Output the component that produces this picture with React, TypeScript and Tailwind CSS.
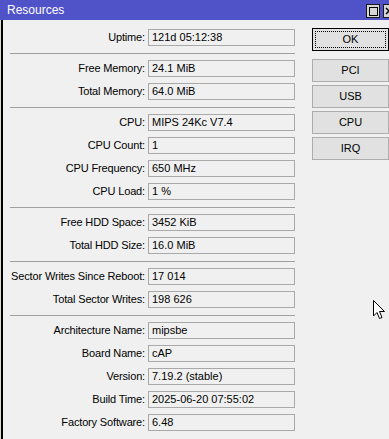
import React from 'react';

const sections: [string, string][][] = [
  [['Uptime', '121d 05:12:38']],
  [
    ['Free Memory', '24.1 MiB'],
    ['Total Memory', '64.0 MiB'],
  ],
  [
    ['CPU', 'MIPS 24Kc V7.4'],
    ['CPU Count', '1'],
    ['CPU Frequency', '650 MHz'],
    ['CPU Load', '1 %'],
  ],
  [
    ['Free HDD Space', '3452 KiB'],
    ['Total HDD Size', '16.0 MiB'],
  ],
  [
    ['Sector Writes Since Reboot', '17 014'],
    ['Total Sector Writes', '198 626'],
  ],
  [
    ['Architecture Name', 'mipsbe'],
    ['Board Name', 'cAP'],
    ['Version', '7.19.2 (stable)'],
    ['Build Time', '2025-06-20 07:55:02'],
    ['Factory Software', '6.48'],
  ],
];

function Field({ label, value }: { label: string; value: string }) {
  return (
    <div className="flex items-center">
      <span className="w-[138px] shrink-0 whitespace-nowrap pr-[3px] text-right leading-[17px] tracking-[-0.15px]">
        {label}:
      </span>
      <div className="h-[17px] w-[147px] border border-[#a9a9a9] pl-[3px] leading-[15px]">{value}</div>
    </div>
  );
}

function SideButton({ children, isDefault }: { children: React.ReactNode; isDefault?: boolean }) {
  return (
    <button
      className={`relative h-[23px] w-[77px] bg-[#e1e1e1] leading-[21px] ${
        isDefault ? 'border border-black' : 'border border-[#adadad]'
      }`}
    >
      {isDefault && <span className="absolute inset-[2px] border border-dotted border-black" />}
      <span className="relative">{children}</span>
    </button>
  );
}

export default function App() {
  return (
    <div className="relative h-[439px] w-[389px] overflow-hidden bg-[#f0f0f0] font-['Liberation_Sans',Arial,sans-serif] text-[11px] text-black">
      <header className="flex h-[20px] items-center bg-[#5052c8] pl-[7px]">
        <span className="text-[12px] text-white">Resources</span>
        <div className="ml-auto flex gap-[3px] self-start pt-[4px]">
          <div className="flex h-[14px] w-[14px] items-center justify-center border border-[#1a1a1a] bg-[#d6d6d6]">
            <div className="h-[9px] w-[9px] border-[1.5px] border-black" />
          </div>
          <div className="h-[14px] w-[6px] overflow-hidden border-y border-l border-[#1a1a1a] bg-[#d6d6d6]">
            <svg width="6" height="12" viewBox="0 0 6 12">
              <path d="M2 3 L8 9 M8 3 L2 9" stroke="#000" strokeWidth="1.5" />
            </svg>
          </div>
        </div>
      </header>

      <div className="flex h-[419px]">
        <div className="w-px shrink-0 bg-[#e4dccb]" />
        <div className="w-[2px] shrink-0 bg-black" />

        <div className="flex w-[292px] shrink-0 flex-col pl-[7px] pt-[9px]">
          {sections.map((rows, i) => (
            <div key={i} className="flex flex-col">
              {i > 0 && <div className="mb-[6px] mt-[7px] h-px w-[285px] bg-[#a0a0a0]" />}
              <div className="flex flex-col gap-[6px]">
                {rows.map(([label, value]) => (
                  <Field key={label} label={label} value={value} />
                ))}
              </div>
            </div>
          ))}
        </div>

        <div className="ml-[17px] flex flex-col pt-[8px]">
          <SideButton isDefault>OK</SideButton>
          <div className="mt-[8px] flex flex-col gap-[3px]">
            <SideButton>PCI</SideButton>
            <SideButton>USB</SideButton>
            <SideButton>CPU</SideButton>
            <SideButton>IRQ</SideButton>
          </div>
        </div>
      </div>

      {/* mouse pointer */}
      <svg className="absolute left-[373px] top-[300px]" width="13" height="20" viewBox="0 0 13 20">
        <path d="M0.5 0.5 L0.5 16 L4 12.5 L6.5 18.5 L9 17.5 L6.5 11.5 L11.5 11.5 Z" fill="#fff" stroke="#000" strokeWidth="1" />
      </svg>
    </div>
  );
}
